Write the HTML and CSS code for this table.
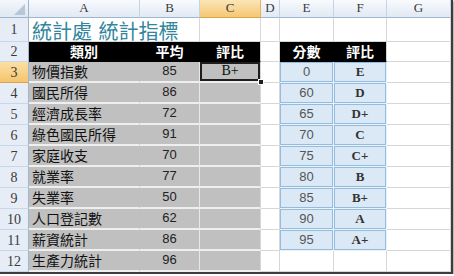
FILE: index.html
```html
<!DOCTYPE html>
<html lang="zh-Hant">
<head>
<meta charset="utf-8">
<link rel="stylesheet" href="styles.css">
</head>
<body>
<div class="sheet">
  <div class="corner"><svg width="28" height="17" viewBox="0 0 28 17"><polygon points="25,4 25,15 14,15" fill="#b7c6d9"/></svg></div>
  <div class="ch">A</div>
  <div class="ch">B</div>
  <div class="ch ch-sel">C</div>
  <div class="ch">D</div>
  <div class="ch">E</div>
  <div class="ch">F</div>
  <div class="ch">G</div>

  <div class="rh">1</div>
  <div class="c title span2">統計處 統計指標</div>
  <div class="c"></div>
  <div class="c"></div>
  <div class="c"></div>
  <div class="c"></div>
  <div class="c"></div>

  <div class="rh">2</div>
  <div class="c hd">類別</div>
  <div class="c hd">平均</div>
  <div class="c hd hd-end">評比</div>
  <div class="c"></div>
  <div class="c hd">分數</div>
  <div class="c hd hd-end">評比</div>
  <div class="c"></div>

  <div class="rh rh-sel">3</div>
  <div class="c ga">物價指數</div>
  <div class="c gb">85</div>
  <div class="c gc sel">B+<span class="handle"></span></div>
  <div class="c"></div>
  <div class="c bl num">0</div>
  <div class="c bl grade">E</div>
  <div class="c"></div>

  <div class="rh">4</div>
  <div class="c ga">國民所得</div>
  <div class="c gb">86</div>
  <div class="c gc"></div>
  <div class="c"></div>
  <div class="c bl num">60</div>
  <div class="c bl grade">D</div>
  <div class="c"></div>

  <div class="rh">5</div>
  <div class="c ga">經濟成長率</div>
  <div class="c gb">72</div>
  <div class="c gc"></div>
  <div class="c"></div>
  <div class="c bl num">65</div>
  <div class="c bl grade">D+</div>
  <div class="c"></div>

  <div class="rh">6</div>
  <div class="c ga">綠色國民所得</div>
  <div class="c gb">91</div>
  <div class="c gc"></div>
  <div class="c"></div>
  <div class="c bl num">70</div>
  <div class="c bl grade">C</div>
  <div class="c"></div>

  <div class="rh">7</div>
  <div class="c ga">家庭收支</div>
  <div class="c gb">70</div>
  <div class="c gc"></div>
  <div class="c"></div>
  <div class="c bl num">75</div>
  <div class="c bl grade">C+</div>
  <div class="c"></div>

  <div class="rh">8</div>
  <div class="c ga">就業率</div>
  <div class="c gb">77</div>
  <div class="c gc"></div>
  <div class="c"></div>
  <div class="c bl num">80</div>
  <div class="c bl grade">B</div>
  <div class="c"></div>

  <div class="rh">9</div>
  <div class="c ga">失業率</div>
  <div class="c gb">50</div>
  <div class="c gc"></div>
  <div class="c"></div>
  <div class="c bl num">85</div>
  <div class="c bl grade">B+</div>
  <div class="c"></div>

  <div class="rh">10</div>
  <div class="c ga">人口登記數</div>
  <div class="c gb">62</div>
  <div class="c gc"></div>
  <div class="c"></div>
  <div class="c bl num">90</div>
  <div class="c bl grade">A</div>
  <div class="c"></div>

  <div class="rh">11</div>
  <div class="c ga">薪資統計</div>
  <div class="c gb">86</div>
  <div class="c gc"></div>
  <div class="c"></div>
  <div class="c bl num">95</div>
  <div class="c bl grade">A+</div>
  <div class="c"></div>

  <div class="rh">12</div>
  <div class="c ga">生產力統計</div>
  <div class="c gb">96</div>
  <div class="c gc"></div>
  <div class="c"></div>
  <div class="c"></div>
  <div class="c"></div>
  <div class="c"></div>
</div>
</body>
</html>
```

FILE: styles.css
```css
* { box-sizing: border-box; }
html, body { margin: 0; padding: 0; background: #fff; }

.sheet {
  display: grid;
  grid-template-columns: 29px 111px 60px 61px 19px 54px 53px 64px;
  grid-template-rows: 18px 24px 20px repeat(10, 21px);
  width: 453px;
  height: 274px;
  border-right: 2px solid #3c3c3c;
  border-bottom: 2px solid #3c3c3c;
  box-shadow: 1px 1px 2px #9a9a9a;
  font-family: "Noto Sans CJK TC", "Noto Sans", sans-serif;
  font-size: 14px;
  line-height: 1.15;
  color: #111;
  overflow: hidden;
}

.corner {
  background: linear-gradient(#f4f7fb, #dfe7f2);
  border-right: 1px solid #9eb6ce;
  border-bottom: 1px solid #9eb6ce;
}
.corner svg { display: block; }

.ch {
  display: flex;
  align-items: center;
  justify-content: center;
  background: linear-gradient(#f8fafd, #e1e9f4);
  border-right: 1px solid #c5d3e4;
  border-bottom: 1px solid #9eb6ce;
  font-family: "Liberation Serif", serif;
  font-size: 13px;
  color: #3a3a3a;
}
.ch-sel {
  background: linear-gradient(#fbe5b8, #f5c772);
  border-right-color: #e3b35d;
  border-bottom-color: #d9a545;
}

.rh {
  display: flex;
  align-items: center;
  justify-content: center;
  background: #e6edf7;
  border-right: 1px solid #9eb6ce;
  border-bottom: 1px solid #c9d6e6;
  font-family: "Liberation Serif", serif;
  font-size: 14px;
  color: #3a3a3a;
  padding-top: 2px;
}
.rh-sel {
  background: linear-gradient(#fbe0a6, #f5c46c);
  border-bottom-color: #d9a545;
}

.c {
  display: flex;
  align-items: center;
  border-right: 1px solid #d6d6d6;
  border-bottom: 1px solid #d6d6d6;
  white-space: nowrap;
}

.span2 { grid-column: span 2; }

.title {
  color: #31859c;
  font-size: 20px;
  padding-left: 3px;
  word-spacing: 2px;
  align-items: flex-end;
  line-height: 21px;
}

.hd {
  background: #000;
  color: #fff;
  font-weight: bold;
  font-size: 14px;
  justify-content: center;
  border-right-color: #000;
  border-bottom-color: #000;
}
.hd-end { border-right-color: #d6d6d6; }

.ga, .gb, .gc {
  background: #c0c0c0;
  border-bottom: 2px solid #efefef;
}
.ga {
  padding-left: 3px;
  border-right-color: #c0c0c0;
}
.gb {
  justify-content: center;
  font-family: "Liberation Sans", sans-serif;
  font-size: 13px;
  color: #222;
  border-right-color: #e8e8e8;
}
.gc {
  justify-content: center;
  border-right-color: #d6d6d6;
}

.sel {
  position: relative;
  box-shadow: inset 0 0 0 2px #1e1e1e;
  font-family: "Liberation Serif", serif;
  font-size: 14px;
}
.handle {
  position: absolute;
  right: -4px;
  bottom: -4px;
  width: 6px;
  height: 6px;
  background: #1e1e1e;
  border: 1px solid #fff;
  z-index: 2;
}

.bl {
  background: #dae9f5;
  box-shadow: inset 0 0 0 1px #93bcdd;
  border-right: 1px solid #eaf3fa;
  border-bottom: 1px solid #eaf3fa;
  justify-content: center;
}
.num {
  font-family: "Liberation Sans", sans-serif;
  font-size: 13px;
  color: #555;
}
.grade {
  font-family: "Liberation Serif", serif;
  font-weight: bold;
  font-size: 13px;
  color: #333;
}
```
